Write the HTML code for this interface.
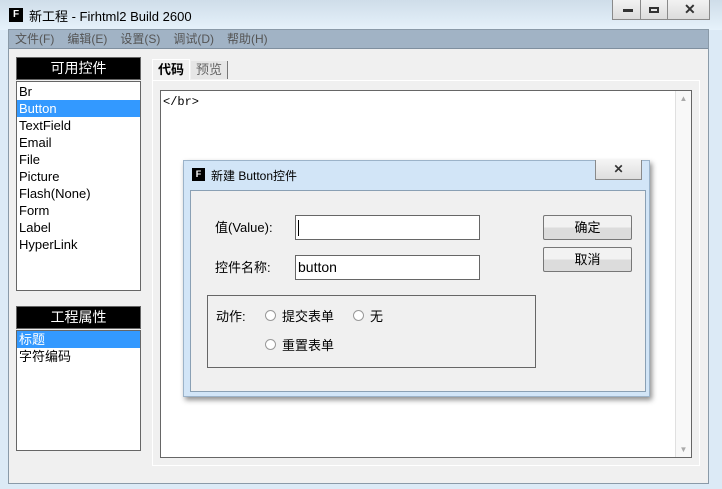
<!DOCTYPE html><html><head><meta charset="utf-8"><style>
*{margin:0;padding:0;box-sizing:border-box}
body{width:722px;height:489px;overflow:hidden;background:#dceaf6;font-family:"Liberation Sans","Noto Sans CJK SC",sans-serif;font-size:13px;color:#000;position:relative}
.a{position:absolute}
</style></head><body>
<div class="a" style="left:0;top:0;width:722px;height:30px;background:linear-gradient(#cfdde9,#e6f2fb)"></div>
<div class="a" style="left:9px;top:8px;width:14px;height:14px;background:#000;color:#fff;font-size:10px;font-weight:bold;text-align:center;line-height:14px">F</div>
<div class="a" style="left:29px;top:6px;font-size:13px">新工程 - Firhtml2 Build 2600</div>
<div class="a" style="left:612px;top:0;width:98px;height:20px;border:1px solid #8a8a8a;border-top:none;background:linear-gradient(#f2f2f2,#dcdcdc)"></div>
<div class="a" style="left:640px;top:0;width:1px;height:20px;background:#8a8a8a"></div>
<div class="a" style="left:667px;top:0;width:1px;height:20px;background:#8a8a8a"></div>
<div class="a" style="left:623px;top:9px;width:10px;height:3px;background:#333"></div>
<div class="a" style="left:649px;top:7px;width:10px;height:6px;border:2px solid #333"></div>
<div class="a" style="left:684px;top:1px;font-size:14px;font-weight:bold;color:#333">✕</div>
<div class="a" style="left:8px;top:29px;width:701px;height:455px;background:#f0f0f0;border:1px solid #8a9aa8"></div>
<div class="a" style="left:9px;top:30px;width:699px;height:19px;background:#a1b3c5;border-bottom:1px solid #7f8f9f;color:#555;font-size:12px;line-height:19px">
<span style="margin-left:6px">文件(F)</span><span style="margin-left:13px">编辑(E)</span><span style="margin-left:13px">设置(S)</span><span style="margin-left:13px">调试(D)</span><span style="margin-left:13px">帮助(H)</span></div>
<div class="a" style="left:16px;top:57px;width:125px;height:23px;background:#000;border:1px solid #666;color:#fff;text-align:center;font-size:14px;line-height:21px">可用控件</div>
<div class="a" style="left:16px;top:81px;width:125px;height:210px;background:#fff;border:1px solid #666;line-height:17px">
<div style="padding-left:2px;margin-top:1px">Br</div><div style="padding-left:2px;background:#3399ff;color:#fff">Button</div><div style="padding-left:2px">TextField</div><div style="padding-left:2px">Email</div><div style="padding-left:2px">File</div><div style="padding-left:2px">Picture</div><div style="padding-left:2px">Flash(None)</div><div style="padding-left:2px">Form</div><div style="padding-left:2px">Label</div><div style="padding-left:2px">HyperLink</div></div>
<div class="a" style="left:16px;top:306px;width:125px;height:23px;background:#000;border:1px solid #666;color:#fff;text-align:center;font-size:14px;line-height:21px">工程属性</div>
<div class="a" style="left:16px;top:330px;width:125px;height:121px;background:#fff;border:1px solid #666;line-height:17px">
<div style="padding-left:2px;background:#3399ff;color:#fff">标题</div><div style="padding-left:2px">字符编码</div></div>
<div class="a" style="left:152px;top:59px;width:38px;height:22px;background:#f0f0f0;border:1px solid #fff;border-bottom:none;font-weight:bold;text-align:center;line-height:20px">代码</div>
<div class="a" style="left:191px;top:61px;width:37px;height:18px;background:#e6e6e6;border-right:1px solid #777;color:#666;text-align:center;line-height:18px">预览</div>
<div class="a" style="left:152px;top:80px;width:548px;height:386px;border:1px solid #fff"></div>
<div class="a" style="left:160px;top:90px;width:532px;height:368px;background:#fff;border:1px solid #666"></div>
<div class="a" style="left:675px;top:91px;width:16px;height:366px;background:#f8f8f8;border-left:1px solid #e0e0e0;color:#aaa;font-size:8px;text-align:center"><div style="margin-top:3px">▲</div><div style="position:absolute;bottom:3px;width:15px">▼</div></div>
<div class="a" style="left:163px;top:95px;font-family:'Liberation Mono',monospace;font-size:12px">&lt;/br&gt;</div>
<div class="a" style="left:183px;top:160px;width:467px;height:237px;background:#d2e5f7;border:1px solid #9cb3c9;box-shadow:2px 3px 5px rgba(0,0,0,.45)"></div>
<div class="a" style="left:192px;top:168px;width:13px;height:13px;background:#000;color:#fff;font-size:9px;font-weight:bold;text-align:center;line-height:13px">F</div>
<div class="a" style="left:211px;top:167px;font-size:12px">新建 Button控件</div>
<div class="a" style="left:595px;top:160px;width:47px;height:20px;border:1px solid #8a8a8a;border-top:none;background:linear-gradient(#f4f4f4,#dedede);text-align:center;font-size:12px;font-weight:bold;color:#333;line-height:18px">✕</div>
<div class="a" style="left:190px;top:190px;width:456px;height:202px;background:#f0f0f0;border:1px solid #8aa0b4"></div>
<div class="a" style="left:215px;top:217px;font-size:13px">值(Value):</div>
<div class="a" style="left:295px;top:215px;width:185px;height:25px;background:#fff;border:1px solid #666"><div style="margin:4px 0 0 2px;width:1px;height:16px;background:#000"></div></div>
<div class="a" style="left:215px;top:257px;font-size:13px">控件名称:</div>
<div class="a" style="left:295px;top:255px;width:185px;height:25px;background:#fff;border:1px solid #666;font-size:14px;padding-left:2px;line-height:23px">button</div>
<div class="a" style="left:543px;top:215px;width:89px;height:25px;border:1px solid #777;border-radius:2px;background:linear-gradient(#f2f2f2 50%,#dcdcdc 50%);text-align:center;line-height:23px">确定</div>
<div class="a" style="left:543px;top:247px;width:89px;height:25px;border:1px solid #777;border-radius:2px;background:linear-gradient(#f2f2f2 50%,#dcdcdc 50%);text-align:center;line-height:23px">取消</div>
<div class="a" style="left:207px;top:295px;width:329px;height:73px;border:1px solid #666"></div>
<div class="a" style="left:216px;top:306px">动作:</div>
<div class="a" style="left:265px;top:310px;width:11px;height:11px;border-radius:50%;border:1px solid #999;background:#fff"></div>
<div class="a" style="left:282px;top:306px">提交表单</div>
<div class="a" style="left:353px;top:310px;width:11px;height:11px;border-radius:50%;border:1px solid #999;background:#fff"></div>
<div class="a" style="left:370px;top:306px">无</div>
<div class="a" style="left:265px;top:339px;width:11px;height:11px;border-radius:50%;border:1px solid #999;background:#fff"></div>
<div class="a" style="left:282px;top:335px">重置表单</div>
</body></html>
